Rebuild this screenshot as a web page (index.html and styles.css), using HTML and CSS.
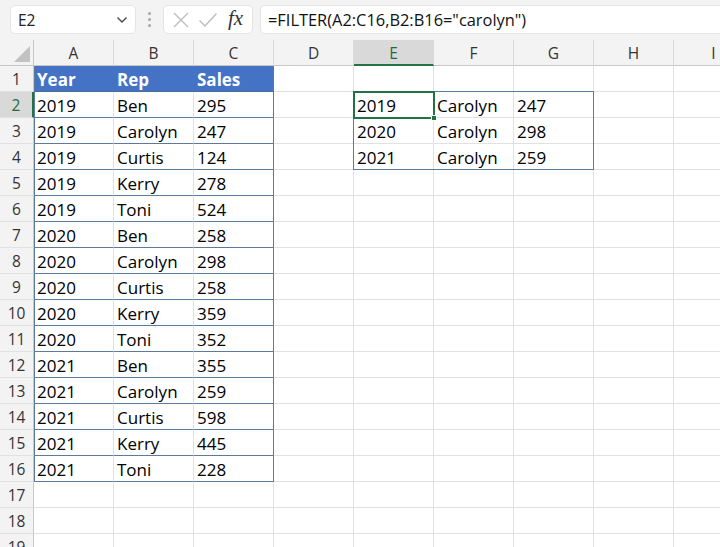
FILE: index.html
```html
<!DOCTYPE html>
<html>
<head>
<meta charset="utf-8">
<link rel="stylesheet" href="styles.css">
</head>
<body>
<div class="app">
  <div class="topbar">
    <div class="namebox"><span class="nb-text">E2</span>
      <svg class="chev" width="12" height="8" viewBox="0 0 12 8"><path d="M1.5 1.5 L6 6 L10.5 1.5" fill="none" stroke="#444" stroke-width="1.3"/></svg>
    </div>
    <div class="dots"><i></i><i></i><i></i></div>
    <div class="fxbox">
      <svg width="18" height="18" viewBox="0 0 18 18"><path d="M2 2 L16 16 M16 2 L2 16" stroke="#bdbdbd" stroke-width="1.4" fill="none"/></svg>
      <svg width="20" height="18" viewBox="0 0 20 18"><path d="M1.5 9.5 L7 15 L18.5 2.5" stroke="#bdbdbd" stroke-width="1.4" fill="none"/></svg>
      <span class="fx">fx</span>
    </div>
    <div class="formula">=FILTER(A2:C16,B2:B16="carolyn")</div>
  </div>
  <div class="sheet">
    <div class="row hdr">
      <div class="corner"><span class="tri"></span></div>
      <div class="ch">A</div><div class="ch">B</div><div class="ch">C</div><div class="ch">D</div><div class="ch sel">E</div><div class="ch">F</div><div class="ch">G</div><div class="ch">H</div><div class="ch">I</div>
    </div>
    <div class="row"><div class="rh">1</div><div class="c th ta">Year</div><div class="c th">Rep</div><div class="c th tc">Sales</div><div class="c"></div><div class="c"></div><div class="c"></div><div class="c"></div><div class="c"></div><div class="c"></div></div>
    <div class="row"><div class="rh sel">2</div><div class="c t ta">2019</div><div class="c t">Ben</div><div class="c t tc">295</div><div class="c"></div><div class="c">2019</div><div class="c">Carolyn</div><div class="c">247</div><div class="c"></div><div class="c"></div></div>
    <div class="row"><div class="rh">3</div><div class="c t ta">2019</div><div class="c t">Carolyn</div><div class="c t tc">247</div><div class="c"></div><div class="c">2020</div><div class="c">Carolyn</div><div class="c">298</div><div class="c"></div><div class="c"></div></div>
    <div class="row"><div class="rh">4</div><div class="c t ta">2019</div><div class="c t">Curtis</div><div class="c t tc">124</div><div class="c"></div><div class="c">2021</div><div class="c">Carolyn</div><div class="c">259</div><div class="c"></div><div class="c"></div></div>
    <div class="row"><div class="rh">5</div><div class="c t ta">2019</div><div class="c t">Kerry</div><div class="c t tc">278</div><div class="c"></div><div class="c"></div><div class="c"></div><div class="c"></div><div class="c"></div><div class="c"></div></div>
    <div class="row"><div class="rh">6</div><div class="c t ta">2019</div><div class="c t">Toni</div><div class="c t tc">524</div><div class="c"></div><div class="c"></div><div class="c"></div><div class="c"></div><div class="c"></div><div class="c"></div></div>
    <div class="row"><div class="rh">7</div><div class="c t ta">2020</div><div class="c t">Ben</div><div class="c t tc">258</div><div class="c"></div><div class="c"></div><div class="c"></div><div class="c"></div><div class="c"></div><div class="c"></div></div>
    <div class="row"><div class="rh">8</div><div class="c t ta">2020</div><div class="c t">Carolyn</div><div class="c t tc">298</div><div class="c"></div><div class="c"></div><div class="c"></div><div class="c"></div><div class="c"></div><div class="c"></div></div>
    <div class="row"><div class="rh">9</div><div class="c t ta">2020</div><div class="c t">Curtis</div><div class="c t tc">258</div><div class="c"></div><div class="c"></div><div class="c"></div><div class="c"></div><div class="c"></div><div class="c"></div></div>
    <div class="row"><div class="rh">10</div><div class="c t ta">2020</div><div class="c t">Kerry</div><div class="c t tc">359</div><div class="c"></div><div class="c"></div><div class="c"></div><div class="c"></div><div class="c"></div><div class="c"></div></div>
    <div class="row"><div class="rh">11</div><div class="c t ta">2020</div><div class="c t">Toni</div><div class="c t tc">352</div><div class="c"></div><div class="c"></div><div class="c"></div><div class="c"></div><div class="c"></div><div class="c"></div></div>
    <div class="row"><div class="rh">12</div><div class="c t ta">2021</div><div class="c t">Ben</div><div class="c t tc">355</div><div class="c"></div><div class="c"></div><div class="c"></div><div class="c"></div><div class="c"></div><div class="c"></div></div>
    <div class="row"><div class="rh">13</div><div class="c t ta">2021</div><div class="c t">Carolyn</div><div class="c t tc">259</div><div class="c"></div><div class="c"></div><div class="c"></div><div class="c"></div><div class="c"></div><div class="c"></div></div>
    <div class="row"><div class="rh">14</div><div class="c t ta">2021</div><div class="c t">Curtis</div><div class="c t tc">598</div><div class="c"></div><div class="c"></div><div class="c"></div><div class="c"></div><div class="c"></div><div class="c"></div></div>
    <div class="row"><div class="rh">15</div><div class="c t ta">2021</div><div class="c t">Kerry</div><div class="c t tc">445</div><div class="c"></div><div class="c"></div><div class="c"></div><div class="c"></div><div class="c"></div><div class="c"></div></div>
    <div class="row"><div class="rh">16</div><div class="c t ta">2021</div><div class="c t">Toni</div><div class="c t tc">228</div><div class="c"></div><div class="c"></div><div class="c"></div><div class="c"></div><div class="c"></div><div class="c"></div></div>
    <div class="row"><div class="rh">17</div><div class="c"></div><div class="c"></div><div class="c"></div><div class="c"></div><div class="c"></div><div class="c"></div><div class="c"></div><div class="c"></div><div class="c"></div></div>
    <div class="row"><div class="rh">18</div><div class="c"></div><div class="c"></div><div class="c"></div><div class="c"></div><div class="c"></div><div class="c"></div><div class="c"></div><div class="c"></div><div class="c"></div></div>
    <div class="row"><div class="rh">19</div><div class="c"></div><div class="c"></div><div class="c"></div><div class="c"></div><div class="c"></div><div class="c"></div><div class="c"></div><div class="c"></div><div class="c"></div></div>
    <div class="spill"></div>
    <div class="active"><span class="handle"></span></div>
  </div>
</div>
</body>
</html>
```
FILE: styles.css
```css
* { box-sizing: border-box; }
html, body { margin: 0; padding: 0; }
body {
  width: 720px;
  height: 547px;
  overflow: hidden;
  background: #ffffff;
  font-family: "Open Sans", "Liberation Sans", sans-serif;
  color: #000;
}
.app { width: 720px; height: 547px; overflow: hidden; }

.topbar {
  height: 40px;
  background: #f3f3f3;
  display: flex;
  align-items: flex-start;
  padding: 5px 0 0 10px;
}
.namebox {
  width: 126px;
  height: 29px;
  background: #fff;
  border: 1px solid #e4e4e4;
  border-radius: 5px;
  display: flex;
  align-items: center;
  justify-content: space-between;
  padding: 0 7px 0 7px;
  font-size: 15.5px;
  color: #222;
}
.chev { margin-top: 1px; }
.dots {
  width: 27px;
  height: 29px;
  display: flex;
  flex-direction: column;
  align-items: center;
  justify-content: center;
  gap: 3px;
}
.dots i {
  display: block;
  width: 3px;
  height: 3px;
  border-radius: 50%;
  background: #a8a8a8;
}
.fxbox {
  width: 90px;
  height: 29px;
  background: #fff;
  border: 1px solid #e4e4e4;
  border-radius: 5px;
  display: flex;
  align-items: center;
  padding: 0 6px 0 8px;
  gap: 8px;
}
.fx {
  font-family: "Liberation Serif", "DejaVu Serif", serif;
  font-style: italic;
  font-size: 21px;
  color: #333;
  margin-left: 2px;
  line-height: 1;
  margin-top: -3px;
}
.formula {
  flex: 1;
  margin-left: 7px;
  height: 29px;
  background: #fff;
  border: 1px solid #e4e4e4;
  border-right: none;
  border-radius: 5px 0 0 5px;
  padding: 0 0 0 7px;
  font-size: 16.4px;
  line-height: 27px;
  color: #111;
  white-space: nowrap;
}

.sheet { position: relative; }
.row { display: flex; height: 26px; }
.rh, .corner {
  flex: 0 0 34px;
  background: #f3f3f3;
  border-right: 1px solid #c8c8c8;
  border-bottom: 1px solid #e1e1e1;
  font-size: 15.5px;
  color: #333;
  text-align: center;
  line-height: 26px;
}
.rh.sel {
  background: #d9d9d9;
  color: #1f6b3f;
  border-right: 2px solid #217346;
}
.corner { position: relative; border-bottom: 1px solid #c8c8c8; }
.tri {
  position: absolute;
  right: 3px;
  bottom: 3px;
  width: 0;
  height: 0;
  border-left: 16px solid transparent;
  border-bottom: 16px solid #c2c2c2;
}
.ch {
  flex: 0 0 80px;
  background: #f3f3f3;
  border-right: 1px solid #dadada;
  border-bottom: 1px solid #c8c8c8;
  font-size: 15.5px;
  color: #333;
  text-align: center;
  line-height: 26px;
}
.ch.sel {
  background: #d9d9d9;
  color: #1f6b3f;
  border-bottom: 2px solid #217346;
}
.c {
  flex: 0 0 80px;
  border-right: 1px solid #e1e1e1;
  border-bottom: 1px solid #e1e1e1;
  font-size: 17px;
  line-height: 25px;
  padding: 1px 0 0 3px;
  white-space: nowrap;
  overflow: hidden;
}
.c.th {
  background: #4472c4;
  color: #fff;
  font-weight: 700;
  border-right-color: #4472c4;
  border-bottom-color: #4a6d9c;
}
.c.t { border-bottom-color: #5b7a9c; }
.c.ta { box-shadow: inset 1px 0 0 #5b7a9c; }
.c.tc { border-right-color: #5b7a9c; }

.spill {
  position: absolute;
  left: 353px;
  top: 51px;
  width: 241px;
  height: 79px;
  border: 1px solid #5b7a9c;
  pointer-events: none;
}
.active {
  position: absolute;
  left: 353px;
  top: 51px;
  width: 82px;
  height: 28px;
  border: 2px solid #217346;
}
.handle {
  position: absolute;
  right: -4px;
  bottom: -4px;
  width: 6px;
  height: 6px;
  background: #217346;
  border: 1px solid #fff;
}
```
